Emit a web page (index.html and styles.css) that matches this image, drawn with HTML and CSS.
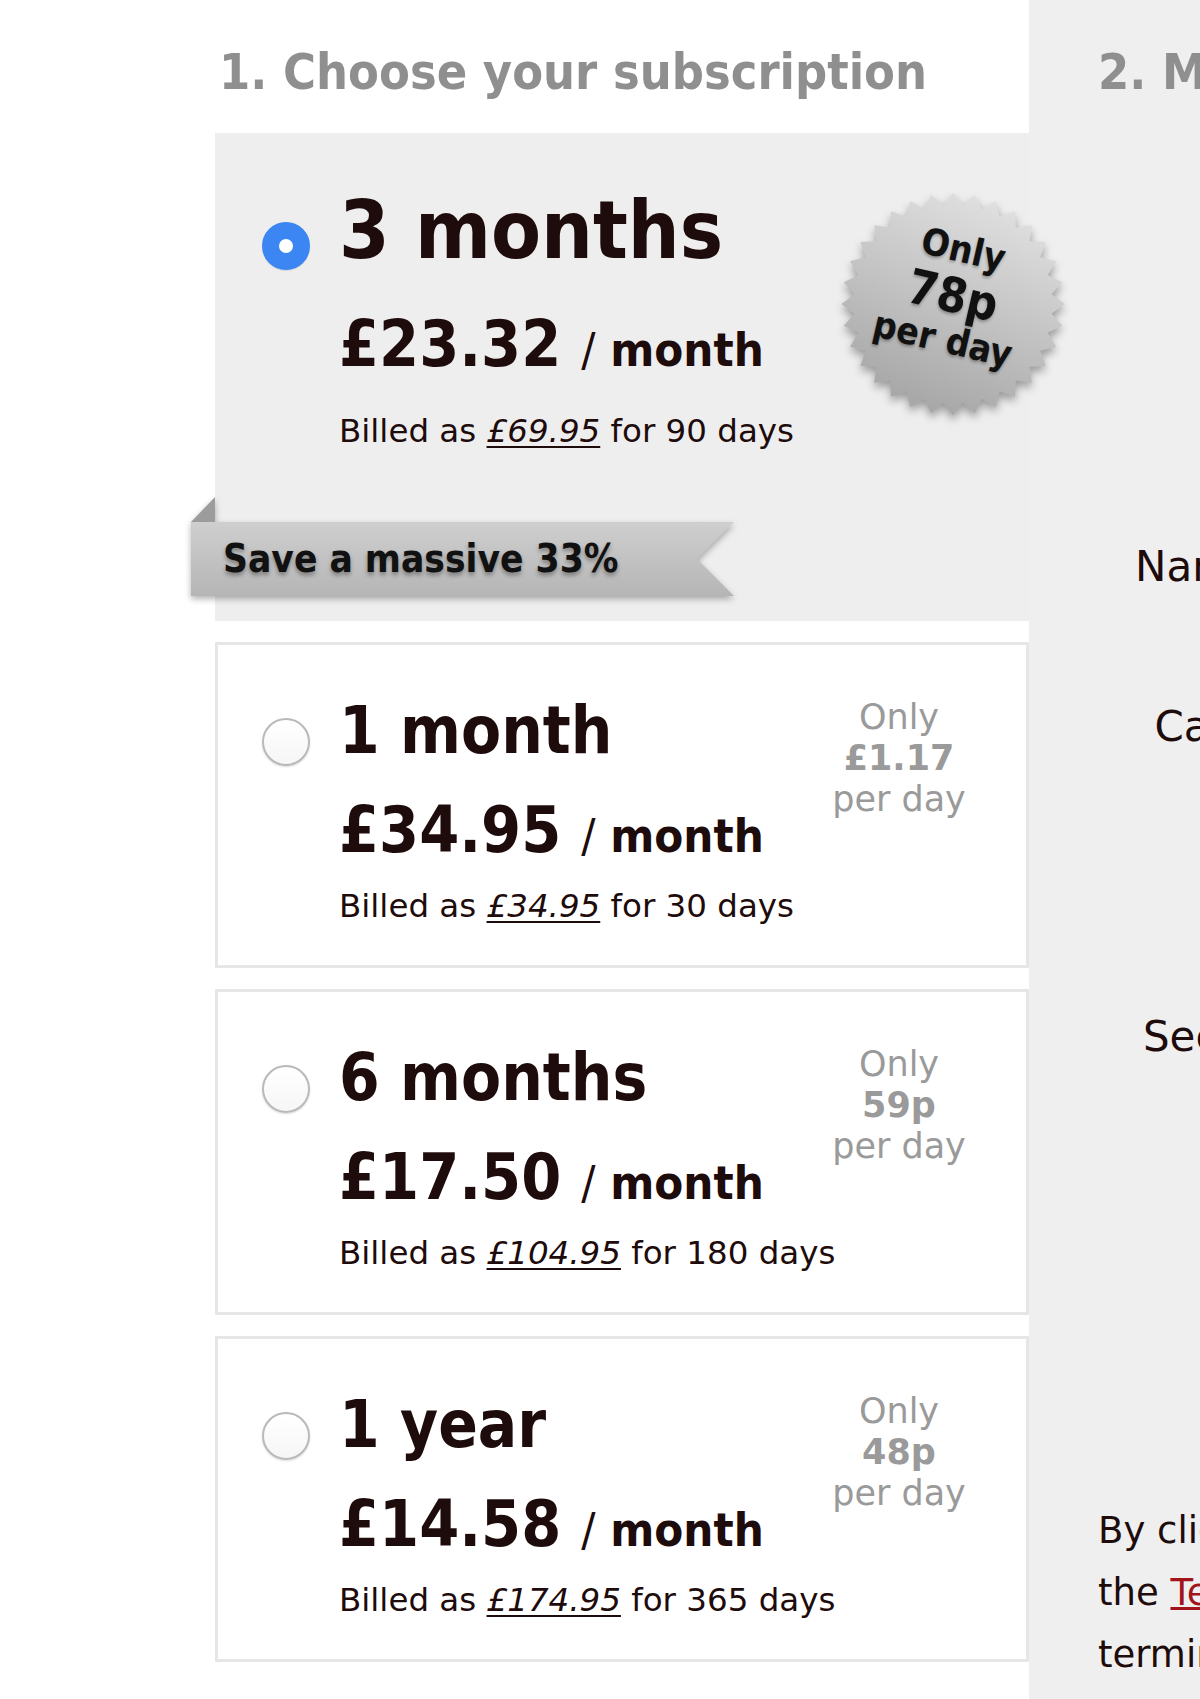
FILE: index.html
```html
<!DOCTYPE html><html><head><meta charset="utf-8"><meta name="viewport" content="width=device-width">
<title>Subscribe</title>
<link rel="stylesheet" href="styles.css">
</head>
<body>

<div class="page">

<div class="plans">
	<h2 class="step">1. Choose your subscription</h2>

	<label class="plan selected">
		<div class="plan-row">
			<span class="radio"></span>
			<div class="plan-info">
				<div class="plan-name">3 months</div>
				<div class="plan-price">£23.32 <span class="per"><span class="slash">/</span> month</span></div>
				<div class="plan-billed">Billed as <em>£69.95</em> for 90 days</div>
			</div>
		</div>
		<div class="starburst">
			<svg width="250" height="250" viewBox="0 0 240 240">
				<defs>
					<linearGradient id="burst" x1="0.7" y1="0" x2="0.3" y2="1">
						<stop offset="0" stop-color="#e2e2e2"/>
						<stop offset="1" stop-color="#a4a4a4"/>
					</linearGradient>
				</defs>
				<polygon fill="url(#burst)" points="120,13 129.3,25.5 140.9,15.1 147.6,29.1 161,21.1 164.8,36.2 179.5,31 180.3,46.6 195.7,44.3 193.4,59.7 209,60.5 203.8,75.2 218.9,79 210.9,92.4 224.9,99.1 214.5,110.7 227,120 214.5,129.3 224.9,140.9 210.9,147.6 218.9,161 203.8,164.8 209,179.5 193.4,180.3 195.7,195.7 180.3,193.4 179.5,209 164.8,203.8 161,218.9 147.6,210.9 140.9,224.9 129.3,214.5 120,227 110.7,214.5 99.1,224.9 92.4,210.9 79,218.9 75.2,203.8 60.5,209 59.7,193.4 44.3,195.7 46.6,180.3 31,179.5 36.2,164.8 21.1,161 29.1,147.6 15.1,140.9 25.5,129.3 13,120 25.5,110.7 15.1,99.1 29.1,92.4 21.1,79 36.2,75.2 31,60.5 46.6,59.7 44.3,44.3 59.7,46.6 60.5,31 75.2,36.2 79,21.1 92.4,29.1 99.1,15.1 110.7,25.5"/>
			</svg>
			<div class="burst-text">
				<div>Only</div>
				<div class="big">78p</div>
				<div>per day</div>
			</div>
		</div>
		<div class="ribbon"><div class="ribbon-band">Save a massive 33%</div></div>
	</label>

	<label class="plan">
		<div class="plan-row">
			<span class="radio"></span>
			<div class="plan-info">
				<div class="plan-name">1 month</div>
				<div class="plan-price">£34.95 <span class="per"><span class="slash">/</span> month</span></div>
				<div class="plan-billed">Billed as <em>£34.95</em> for 30 days</div>
			</div>
			<div class="perday">Only<br><b>£1.17</b><br>per day</div>
		</div>
	</label>

	<label class="plan">
		<div class="plan-row">
			<span class="radio"></span>
			<div class="plan-info">
				<div class="plan-name">6 months</div>
				<div class="plan-price">£17.50 <span class="per"><span class="slash">/</span> month</span></div>
				<div class="plan-billed">Billed as <em>£104.95</em> for 180 days</div>
			</div>
			<div class="perday">Only<br><b>59p</b><br>per day</div>
		</div>
	</label>

	<label class="plan">
		<div class="plan-row">
			<span class="radio"></span>
			<div class="plan-info">
				<div class="plan-name">1 year</div>
				<div class="plan-price">£14.58 <span class="per"><span class="slash">/</span> month</span></div>
				<div class="plan-billed">Billed as <em>£174.95</em> for 365 days</div>
			</div>
			<div class="perday">Only<br><b>48p</b><br>per day</div>
		</div>
	</label>
</div>

<div class="payment">
	<h2 class="step">2. Make your payment</h2>
	<div class="fields">
		<div class="field f-name">Name on card</div>
		<div class="field f-card">Card number</div>
		<div class="field f-code">Security code</div>
	</div>
	<p class="terms">By clicking Subscribe you agree to<br>
	the <a href="#">Terms &amp; Conditions</a> and can<br>
	terminate your subscription at any time.</p>
</div>

</div>

</body>
</html>
```

FILE: styles.css
```css
body {
	margin: 0;
	overflow: hidden;
	background: #fff;
	font-family: "DejaVu Sans", sans-serif;
	color: #1e0b0b;
}
.page {
	display: flex;
	width: 1700px;
	min-height: 1699px;
}
.plans {
	flex: none;
	width: 814px;
	margin-left: 215px;
}
.payment {
	flex: 1;
	background: #efefef;
	padding-left: 69px;
	white-space: nowrap;
}
.step {
	margin: 42px 0 31px 4px;
	font: bold 50px/60px "DejaVu Sans Condensed", "DejaVu Sans", sans-serif;
	font-stretch: condensed;
	color: #8f8f8f;
}
.payment .step {
	margin-left: 0;
}

/* plan cards */
.plan {
	display: block;
	position: relative;
	border: 3px solid #e6e6e6;
	padding: 46px 0 39px;
	margin-bottom: 21px;
	cursor: pointer;
}
.plan.selected {
	background: #eee;
	border-color: #eee;
	padding: 44px 0 22px;
}
.plan-row {
	display: flex;
	align-items: flex-start;
	padding-left: 44px;
}
.radio {
	flex: none;
	box-sizing: border-box;
	width: 48px;
	height: 48px;
	margin: 27px 29px 0 0;
	border-radius: 50%;
	border: 2px solid #b9b9b9;
	background: linear-gradient(#fff, #f6f6f6);
	box-shadow: 0 1px 2px rgba(0,0,0,.15);
}
.selected .radio {
	margin-top: 42px;
	border: 17px solid #3b86f3;
	background: #fff;
	box-shadow: 0 1px 1px rgba(0,0,0,.1);
}
.plan-info {
	flex: 1;
	min-width: 0;
	white-space: nowrap;
}
.plan-name,
.plan-price,
.burst-text,
.ribbon-band {
	font-family: "DejaVu Sans Condensed", "DejaVu Sans", sans-serif;
	font-stretch: condensed;
	font-weight: bold;
}
.plan-name {
	font-size: 65px;
	line-height: 80px;
}
.selected .plan-name {
	font-size: 81px;
	line-height: 100px;
}
.plan-price {
	font-size: 64px;
	line-height: 80px;
	margin-top: 19px;
}
.selected .plan-price {
	margin-top: 24px;
}
.plan-price .per {
	font-size: 47px;
}
.plan-price .slash {
	font-weight: normal;
}
.plan-billed {
	font-size: 32.5px;
	line-height: 40px;
	margin-top: 10px;
}
.selected .plan-billed {
	margin-top: 21px;
}
.plan-billed em {
	text-decoration: underline;
	text-decoration-thickness: 2px;
	text-underline-offset: 4px;
}
.perday {
	flex: none;
	width: 180px;
	margin: 6px 37px 0 0;
	text-align: center;
	color: #9a9a9a;
	font-size: 35px;
	line-height: 41px;
}

/* 78p badge */
.starburst {
	position: absolute;
	left: 610px;
	top: 43px;
	width: 250px;
	height: 250px;
}
.starburst svg {
	display: block;
	filter: drop-shadow(0 5px 4px rgba(0,0,0,.35));
}
.burst-text {
	position: absolute;
	left: 0;
	top: 0;
	width: 250px;
	height: 250px;
	display: flex;
	flex-direction: column;
	justify-content: center;
	align-items: center;
	margin-top: -9px;
	transform: rotate(13deg);
	font-size: 37px;
	line-height: 46px;
	color: #111;
	text-shadow: 0 2px 3px rgba(0,0,0,.3);
}
.burst-text .big {
	font-size: 48px;
}

/* save ribbon */
.ribbon {
	position: relative;
	width: 543px;
	height: 74px;
	margin: 71px 0 0 -27px;
	filter: drop-shadow(0 3px 3px rgba(0,0,0,.3));
}
.ribbon::before {
	content: "";
	position: absolute;
	left: 0;
	top: -25px;
	width: 24px;
	height: 25px;
	background: #9c9c9c;
	clip-path: polygon(0 100%, 100% 0, 100% 100%);
}
.ribbon-band {
	height: 74px;
	padding-left: 32px;
	background: linear-gradient(#cfcfcf, #b5b5b5);
	clip-path: polygon(0 0, 100% 0, calc(100% - 37px) 50%, 100% 100%, 0 100%);
	font-size: 38.5px;
	line-height: 74px;
	color: #111;
	text-shadow: 0 3px 4px rgba(0,0,0,.35);
}

/* payment column */
.fields {
	width: 332px;
	text-align: right;
}
.field {
	font-size: 42px;
	line-height: 50px;
}
.f-name {
	margin-top: 440px;
}
.f-card {
	margin-top: 110px;
}
.f-code {
	margin-top: 260px;
}
.terms {
	margin: 438px 0 0;
	font-size: 37px;
	line-height: 62px;
}
.terms a {
	color: #a3131c;
}
```
